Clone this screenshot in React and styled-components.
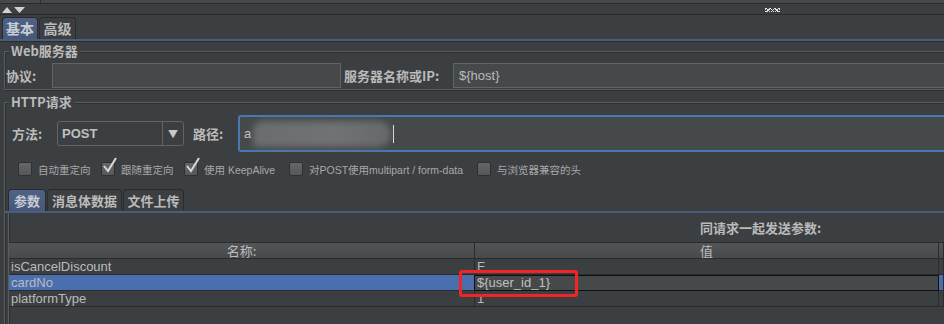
import React from 'react'
import styled, { createGlobalStyle } from 'styled-components'

const GlobalStyle = createGlobalStyle`
  html, body {
    margin: 0;
    padding: 0;
    background: #3c3f41;
    overflow: hidden;
  }
  body {
    font-family: "Noto Sans CJK SC", "Liberation Sans", sans-serif;
    color: #bbbbbb;
  }
`

const checks = [
  { label: '自动重定向', checked: false, w: 83 },
  { label: '跟随重定向', checked: true, w: 83 },
  { label: '使用 KeepAlive', checked: true, w: 105 },
  { label: '对POST使用multipart / form-data', checked: false, w: 188 },
  { label: '与浏览器兼容的头', checked: false, w: 120 },
]

const rows = [
  { name: 'isCancelDiscount', value: 'F' },
  { name: 'cardNo', value: '${user_id_1}', selected: true },
  { name: 'platformType', value: '1' },
]

function Triangles() {
  return (
    <svg width="26" height="8" viewBox="0 0 26 8">
      <polygon points="2,7 7,1 12,7" fill="#d0d0d0" />
      <polygon points="14,1 25,1 19.5,7" fill="#d0d0d0" />
    </svg>
  )
}

function Check({ checked }) {
  return (
    <Box>
      {checked && (
        <svg width="18" height="18" viewBox="0 0 18 18">
          <path d="M3 9 L7 14 L15 1" stroke="#d8d8d8" strokeWidth="2" fill="none" />
        </svg>
      )}
    </Box>
  )
}

export default function App() {
  return (
    <Page>
      <GlobalStyle />
      <TopStrip />
      <SplitBar>
        <Triangles />
        <Grip />
      </SplitBar>
      <TabBar>
        <Tab selected w={36}>基本</Tab>
        <Tab w={37}>高级</Tab>
      </TabBar>

      <Group>
        <Legend>Web服务器</Legend>
        <Row h={25} pl={1}>
          <Label w={46}>协议:</Label>
          <Input w={289} />
          <Label w={109} ml={3}>服务器名称或IP:</Label>
          <Input grow>${'{host}'}</Input>
        </Row>
      </Group>

      <Group open>
        <Legend>HTTP请求</Legend>
        <Row h={37} pl={7}>
          <Label w={45}>方法:</Label>
          <Combo>
            <ComboText>POST</ComboText>
            <ComboArrow>▼</ComboArrow>
          </Combo>
          <Label w={45} ml={9}>路径:</Label>
          <PathInput>
            a<Blur /><Caret />
          </PathInput>
        </Row>
        <CheckRow>
          {checks.map((c, i) => (
            <CheckItem key={i} w={c.w}>
              <Check checked={c.checked} />
              <CheckLabel>{c.label}</CheckLabel>
            </CheckItem>
          ))}
        </CheckRow>
        <SubTabBar>
          <SubTab selected w={38}>参数</SubTab>
          <SubTab w={75}>消息体数据</SubTab>
          <SubTab w={61}>文件上传</SubTab>
        </SubTabBar>
        <SubPanel>
          <Caption>同请求一起发送参数:</Caption>
          <Table>
            <HeadCell>名称:</HeadCell>
            <HeadCell>值</HeadCell>
            <HeadCell />
            {rows.map((r, i) => (
              <React.Fragment key={i}>
                <Cell selected={r.selected}>{r.name}</Cell>
                {r.selected ? <EditCell>{r.value}</EditCell> : <Cell>{r.value}</Cell>}
                <Cell selected={r.selected} />
              </React.Fragment>
            ))}
          </Table>
        </SubPanel>
      </Group>
      <Marker />
    </Page>
  )
}

const Page = styled.div`
  position: relative;
  width: 944px;
  height: 324px;
  overflow: hidden;
`

const TopStrip = styled.div`
  height: 3px;
  background: linear-gradient(to right, #46494b 0 40px, #2f3133 40px 41px, #46494b 41px);
  border-bottom: 1px solid #2b2b2b;
`

const SplitBar = styled.div`
  height: 10px;
  display: flex;
  align-items: center;
  border-bottom: 1px solid #2b2b2b;
  padding-top: 0;
  svg { margin-top: 2px; }
`

const Grip = styled.div`
  width: 15px;
  height: 4px;
  margin-left: 739px;
  margin-top: 2px;
  background-image: repeating-linear-gradient(45deg, #e0e0e0 0 1px, transparent 1px 3px),
    repeating-linear-gradient(-45deg, #e0e0e0 0 1px, transparent 1px 3px);
`

const TabBar = styled.div`
  display: flex;
  align-items: flex-end;
  height: 24px;
  padding-left: 2px;
  border-bottom: 2px solid #4b5c7e;
  box-shadow: 0 1px 0 #2b2b2b;
`

const Tab = styled.div`
  width: ${p => p.w}px;
  height: 22px;
  box-sizing: border-box;
  margin-right: 1px;
  border: 1px solid #2b2b2b;
  border-bottom: none;
  border-radius: 4px 4px 0 0;
  background: ${p => (p.selected ? 'linear-gradient(#4f6285, #46587a)' : '#3c3f41')};
  color: ${p => (p.selected ? '#c8ccd4' : '#bbbbbb')};
  font-size: 14px;
  font-weight: 700;
  line-height: 21px;
  text-align: center;
`

const Group = styled.div`
  margin: ${p => (p.open ? '12px' : '10px')} 0 0 4px;
  border: 1px solid #5a5d5f;
  border-right: none;
  ${p => (p.open ? 'border-bottom: none; height: 230px;' : 'padding-bottom: 1px;')}
  box-shadow: inset 1px 1px 0 #2e3032, 0 1px 0 #2e3032;
`

const Legend = styled.div`
  width: fit-content;
  margin: -9px 0 0 4px;
  padding: 0 2px;
  background: #3c3f41;
  font-size: 13px;
  font-weight: 700;
  line-height: 16px;
  color: #bbbbbb;
`

const Row = styled.div`
  display: flex;
  align-items: center;
  height: ${p => p.h}px;
  margin-top: ${p => (p.h > 30 ? 5 : 4)}px;
  padding-left: ${p => p.pl}px;
`

const Label = styled.div`
  flex: none;
  width: ${p => p.w}px;
  margin-left: ${p => p.ml || 0}px;
  font-size: 13px;
  font-weight: 700;
  white-space: nowrap;
`

const Input = styled.div`
  box-sizing: border-box;
  height: 25px;
  ${p => (p.grow ? 'flex: 1;' : `width: ${p.w}px; flex: none;`)}
  background: #45494a;
  border: 1px solid #646464;
  border-right: ${p => (p.grow ? 'none' : '1px solid #646464')};
  padding-left: 5px;
  font-family: "Liberation Sans", sans-serif;
  font-size: 13px;
  line-height: 23px;
  color: #bbbbbb;
`

const Combo = styled.div`
  flex: none;
  display: flex;
  box-sizing: border-box;
  width: 127px;
  height: 25px;
  border: 1px solid #646464;
  border-radius: 3px;
  background: #3c3f41;
`

const ComboText = styled.div`
  flex: 1;
  padding-left: 4px;
  font-family: "Liberation Sans", sans-serif;
  font-weight: 700;
  font-size: 13px;
  line-height: 23px;
  color: #c0c0c0;
`

const ComboArrow = styled.div`
  width: 20px;
  border-left: 1px solid #646464;
  font-size: 10px;
  line-height: 23px;
  text-align: center;
  color: #c8c8c8;
`

const PathInput = styled.div`
  flex: 1;
  display: flex;
  align-items: center;
  box-sizing: border-box;
  height: 37px;
  background: #45494a;
  border: 2px solid #4a78b0;
  border-right: none;
  border-radius: 3px 0 0 3px;
  padding-left: 4px;
  font-family: "Liberation Sans", sans-serif;
  font-size: 13px;
  color: #c8c8c8;
`

const Blur = styled.span`
  width: 138px;
  height: 26px;
  margin-left: 2px;
  background: linear-gradient(to right, #6a6d6f, #707274 60%, #66696b);
  border-radius: 10px 14px 14px 4px;
  filter: blur(3px);
`

const Caret = styled.span`
  width: 1px;
  height: 18px;
  margin-left: 2px;
  background: #e8e8e8;
`

const CheckRow = styled.div`
  display: flex;
  align-items: center;
  height: 22px;
  margin-top: 6px;
  padding-left: 13px;
`

const CheckItem = styled.div`
  display: flex;
  align-items: center;
  width: ${p => p.w}px;
  flex: none;
`

const Box = styled.div`
  position: relative;
  width: 14px;
  height: 14px;
  box-sizing: border-box;
  background: linear-gradient(#646769, #55585a);
  border: 1px solid #2e3032;
  border-radius: 2px;
  svg {
    position: absolute;
    left: -1px;
    top: -6px;
  }
`

const CheckLabel = styled.span`
  margin-left: 6px;
  font-size: 10.5px;
  color: #a8a8a8;
  white-space: nowrap;
  font-family: "Liberation Sans", "Noto Sans CJK SC", sans-serif;
`

const SubTabBar = styled.div`
  display: flex;
  align-items: flex-end;
  height: 23px;
  margin-top: 8px;
  padding-left: 3px;
  border-bottom: 2px solid #4b5c7e;
`

const SubTab = styled(Tab)`
  height: 22px;
  font-size: 13px;
  line-height: 21px;
`

const SubPanel = styled.div`
  margin-left: 3px;
  border-left: 1px solid #5a5d5f;
  box-shadow: inset 1px 0 0 #2e3032;
  height: 120px;
`

const Caption = styled.div`
  padding: 7px 0 0 691px;
  height: 16px;
  line-height: 16px;
  font-size: 13px;
  font-weight: 700;
`

const Table = styled.div`
  display: grid;
  grid-template-columns: 466px 464px 1fr;
  grid-auto-rows: 16px;
  margin-top: 6px;
  border-top: 1px solid #2b2b2b;
  font-family: "Liberation Sans", sans-serif;
  font-size: 13px;
`

const HeadCell = styled.div`
  height: 16px;
  box-sizing: border-box;
  border-right: 1px solid #2b2b2b;
  border-bottom: 1px solid #2b2b2b;
  background: linear-gradient(#525557, #47494b);
  text-align: center;
  line-height: 15px;
  font-family: "Noto Sans CJK SC", sans-serif;
  font-size: 13px;
  color: #bbbbbb;
`

const Cell = styled.div`
  box-sizing: border-box;
  border-right: 1px solid #2b2b2b;
  border-bottom: 1px solid #2b2b2b;
  background: ${p => (p.selected ? '#4b6eaf' : '#3c3f41')};
  padding-left: 2px;
  line-height: 15px;
  color: #bbbbbb;
  white-space: nowrap;
  overflow: hidden;
`

const EditCell = styled.div`
  box-sizing: border-box;
  margin-left: -1px;
  border: 1px solid #111111;
  background: #45494a;
  padding-left: 2px;
  line-height: 13px;
  color: #c0c0c0;
`

const Marker = styled.div`
  position: absolute;
  left: 459px;
  top: 270px;
  width: 119px;
  height: 27px;
  box-sizing: border-box;
  border: 3px solid #f22424;
  border-radius: 3px;
`
